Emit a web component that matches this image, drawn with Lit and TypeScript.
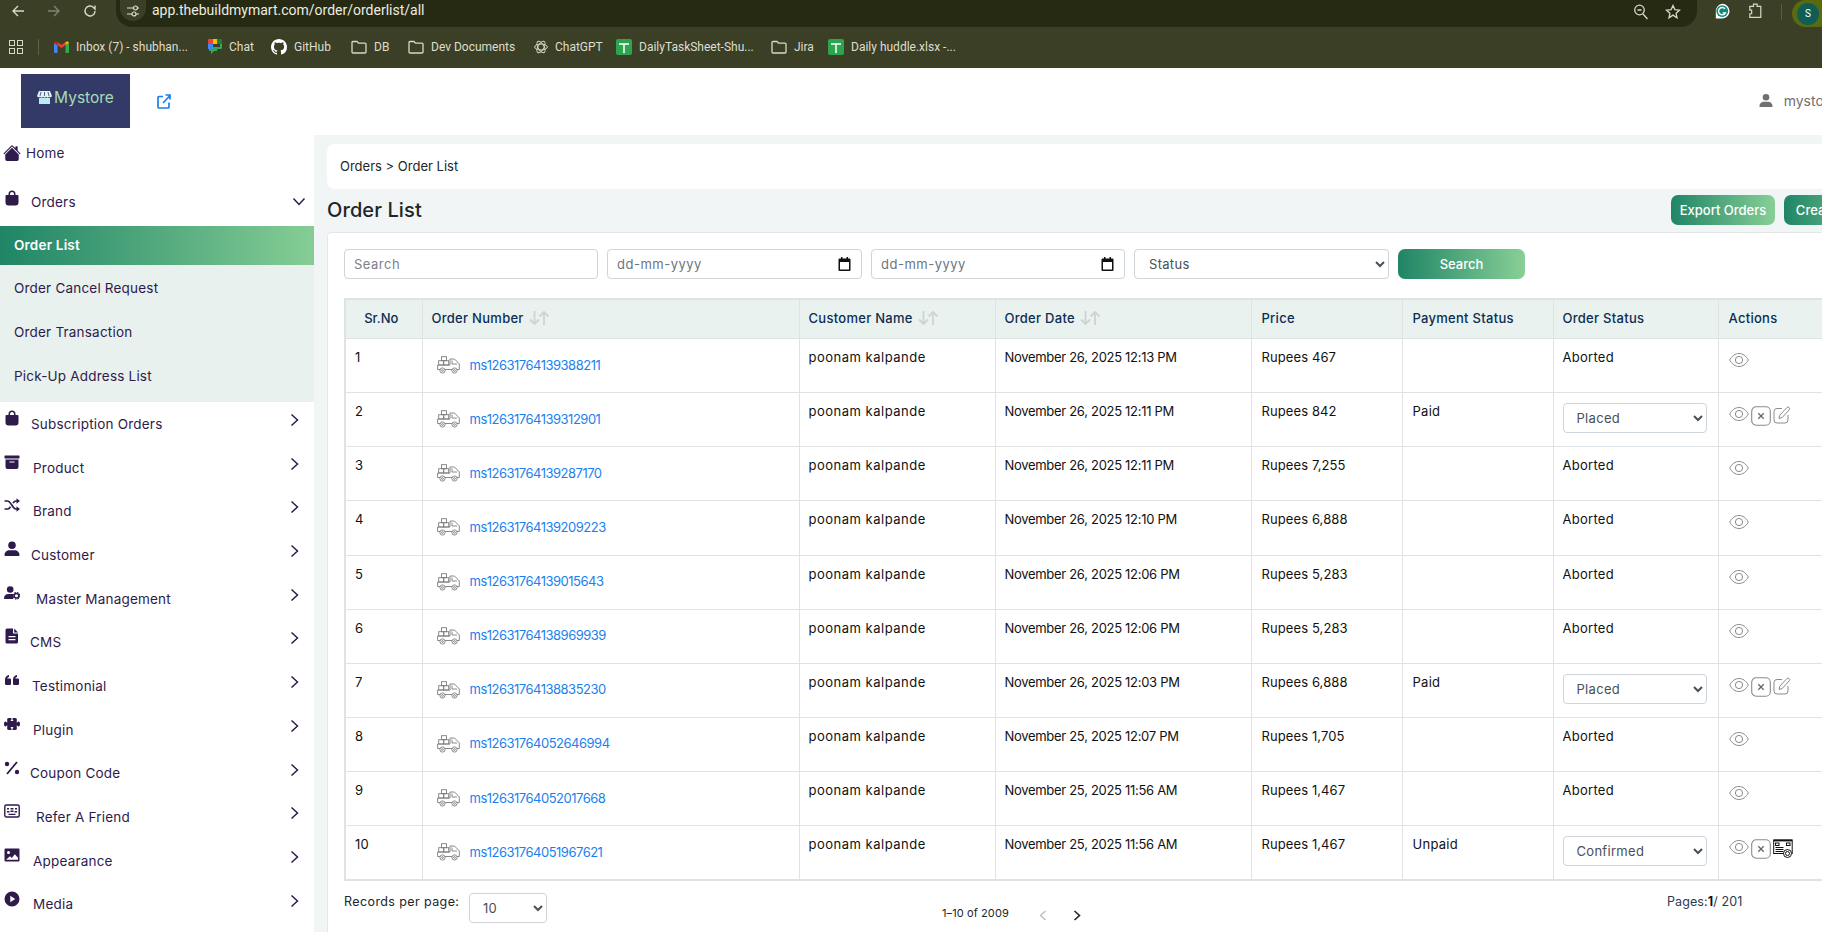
import { LitElement, html, css, svg } from "lit";
import { customElement } from "lit/decorators.js";

const F = (d: string) => svg`<path fill="currentColor" fill-rule="evenodd" d=${d}/>`;
const sideIcons: Record<string, unknown> = {
  home: svg`<path fill="currentColor" d="M8.707 1.5a1 1 0 0 0-1.414 0L.646 8.146a.5.5 0 0 0 .708.708L8 2.207l6.646 6.647a.5.5 0 0 0 .708-.708L13 5.793V2.5a.5.5 0 0 0-.5-.5h-1a.5.5 0 0 0-.5.5v1.293L8.707 1.5Z"/><path fill="currentColor" d="m8 3.293 6 6V13.5a1.5 1.5 0 0 1-1.5 1.5h-9A1.5 1.5 0 0 1 2 13.5V9.293l6-6Z"/>`,
  bag: F("M4.5 5V4a3.5 3.5 0 0 1 7 0v1h2a1 1 0 0 1 1 1v6.5a3 3 0 0 1-3 3h-7a3 3 0 0 1-3-3V6a1 1 0 0 1 1-1zM6 5h4V4a2 2 0 0 0-4 0z"),
  box: F("M1 1.5h14a.5.5 0 0 1 .5.5v2a.5.5 0 0 1-.5.5H1a.5.5 0 0 1-.5-.5V2a.5.5 0 0 1 .5-.5zM1.5 5.5h13V13a2 2 0 0 1-2 2h-9a2 2 0 0 1-2-2zM5.5 7.5v1h5v-1z"),
  shuffle: svg`<g fill="none" stroke="currentColor" stroke-width="1.7"><path d="M.5 4h3c3.5 0 5 8 8.500 8h1.500M.5 12h3c1.300 0 2.200-1 3-2.300M9 6c.8-1.100 1.700-2 3-2h1.500"/></g><path fill="currentColor" d="M12.500 1.300 16 4l-3.500 2.700zM12.500 9.300 16 12l-3.500 2.700z"/>`,
  user: F("M8 .5a3.800 3.800 0 1 1 0 7.600A3.800 3.800 0 0 1 8 .5zM1.500 15c-.6 0-1-.4-1-1 0-3 2.500-4.800 5-4.800h5c2.500 0 5 1.800 5 4.800 0 .6-.4 1-1 1z"),
  usercog: svg`<path fill="currentColor" d="M6.200 1.200a3.300 3.300 0 1 1 0 6.600 3.300 3.300 0 0 1 0-6.600zM.5 14c-.4 0-.5-.3-.5-.7C0 10.800 1.800 9 4.200 9h3.600c.5 0 1 .1 1.400.2V14z"/><circle cx="12.500" cy="10.800" r="2.300" fill="none" stroke="currentColor" stroke-width="1.500"/><circle cx="12.500" cy="10.800" r="3.300" fill="none" stroke="currentColor" stroke-width="1.100" stroke-dasharray="1.500 1.100"/>`,
  file: F("M3 .5h6v4.200a.8.8 0 0 0 .8.8H14V14a1.500 1.500 0 0 1-1.500 1.500h-9.500A1.500 1.500 0 0 1 1.500 14V2A1.500 1.500 0 0 1 3 .5zM10.200.6 14 4.400h-3.800zM4.500 8v1.200h7V8zM4.500 11v1.200h7V11z"),
  quote: F("M1 7.500C1 5 2.800 3.300 5 3v2c-1 .2-1.600.8-1.700 1.500H6a1 1 0 0 1 1 1V12a1 1 0 0 1-1 1H2a1 1 0 0 1-1-1zM9 7.500C9 5 10.800 3.300 13 3v2c-1 .2-1.600.8-1.700 1.500H14a1 1 0 0 1 1 1V12a1 1 0 0 1-1 1h-4a1 1 0 0 1-1-1z"),
  puzzle: F("M3.112 3.645A1.5 1.5 0 0 1 4.605 2H7a.5.5 0 0 1 .5.5v.382c0 .696-.497 1.182-.872 1.469a.459.459 0 0 0-.115.118.113.113 0 0 0-.012.025L6.5 4.5v.003l.003.01c.004.01.014.028.036.053a.86.86 0 0 0 .27.194C7.09 4.9 7.51 5 8 5c.492 0 .912-.1 1.19-.24a.86.86 0 0 0 .271-.194.213.213 0 0 0 .036-.054l.003-.01v-.008a.112.112 0 0 0-.012-.025.459.459 0 0 0-.115-.118c-.375-.287-.872-.773-.872-1.469V2.5A.5.5 0 0 1 9 2h2.395a1.5 1.5 0 0 1 1.493 1.645L12.645 6.5h.237c.195 0 .42-.147.675-.48.21-.274.528-.52.943-.52.568 0 .947.447 1.154.862C15.877 6.807 16 7.387 16 8s-.123 1.193-.346 1.638c-.207.415-.586.862-1.154.862-.415 0-.733-.246-.943-.52-.255-.333-.48-.48-.675-.48h-.237l.243 2.855A1.5 1.5 0 0 1 11.395 14H9a.5.5 0 0 1-.5-.5v-.382c0-.696.497-1.182.872-1.469a.459.459 0 0 0 .115-.118.113.113 0 0 0 .012-.025L9.5 11.500v-.003a.214.214 0 0 0-.039-.064.859.859 0 0 0-.27-.193C8.910 11.100 8.490 11 8 11c-.491 0-.912.100-1.190.240a.859.859 0 0 0-.271.194.214.214 0 0 0-.039.063v.003l.001.006a.113.113 0 0 0 .012.025c.016.027.05.068.115.118.375.287.872.773.872 1.469v.382a.5.5 0 0 1-.5.5H4.605a1.5 1.5 0 0 1-1.493-1.645L3.356 9.500h-.238c-.195 0-.42.147-.675.48-.21.274-.528.52-.943.52-.568 0-.947-.447-1.154-.862C.123 9.193 0 8.613 0 8s.123-1.193.346-1.638C.553 5.947.932 5.500 1.500 5.500c.415 0 .733.246.943.52.255.333.48.48.675.48h.238l-.244-2.855z"),
  percent: svg`<path stroke="currentColor" stroke-width="1.800" d="M3 14 13 2"/><circle cx="3" cy="4" r="2.200" fill="currentColor"/><circle cx="13" cy="12" r="2.200" fill="currentColor"/>`,
  refer: svg`<rect x=".8" y="2" width="14.400" height="12" rx="1.500" fill="none" stroke="currentColor" stroke-width="1.400"/><path fill="currentColor" d="M3 5h2v1.500H3zM6.500 5h3v1.500h-3zM11 5h2v1.500h-2zM3 8h2.500v1.500H3zM10.500 8H13v1.500h-2.500zM6.500 7.500h3V9h-3zM4.500 10.800h7v1.200h-7z"/>`,
  image: F("M1.500 1.500h13a1 1 0 0 1 1 1v11a1 1 0 0 1-1 1h-13a1 1 0 0 1-1-1v-11a1 1 0 0 1 1-1zM4.500 4a1.500 1.500 0 1 0 0 3 1.500 1.500 0 0 0 0-3zM2 12.800h12v-2l-3.200-3.600-3 3.800-1.800-1.700z"),
  play: F("M8 .5a7.500 7.500 0 1 1 0 15 7.500 7.500 0 0 1 0-15zM6.300 4.800v6.400L11.200 8z"),
};

const nav = [
  { t: "Subscription Orders", i: "bag", x: 31 },
  { t: "Product", i: "box", x: 33 },
  { t: "Brand", i: "shuffle", x: 33 },
  { t: "Customer", i: "user", x: 31 },
  { t: "Master Management", i: "usercog", x: 36 },
  { t: "CMS", i: "file", x: 30 },
  { t: "Testimonial", i: "quote", x: 32 },
  { t: "Plugin", i: "puzzle", x: 33 },
  { t: "Coupon Code", i: "percent", x: 30 },
  { t: "Refer A Friend", i: "refer", x: 36 },
  { t: "Appearance", i: "image", x: 33 },
  { t: "Media", i: "play", x: 33 },
];

const rows = [
  ["1", "ms12631764139388211", "November 26, 2025 12:13 PM", "Rupees 467", "", "Aborted", "v"],
  ["2", "ms12631764139312901", "November 26, 2025 12:11 PM", "Rupees 842", "Paid", "Placed", "vxe"],
  ["3", "ms12631764139287170", "November 26, 2025 12:11 PM", "Rupees 7,255", "", "Aborted", "v"],
  ["4", "ms12631764139209223", "November 26, 2025 12:10 PM", "Rupees 6,888", "", "Aborted", "v"],
  ["5", "ms12631764139015643", "November 26, 2025 12:06 PM", "Rupees 5,283", "", "Aborted", "v"],
  ["6", "ms12631764138969939", "November 26, 2025 12:06 PM", "Rupees 5,283", "", "Aborted", "v"],
  ["7", "ms12631764138835230", "November 26, 2025 12:03 PM", "Rupees 6,888", "Paid", "Placed", "vxe"],
  ["8", "ms12631764052646994", "November 25, 2025 12:07 PM", "Rupees 1,705", "", "Aborted", "v"],
  ["9", "ms12631764052017668", "November 25, 2025 11:56 AM", "Rupees 1,467", "", "Aborted", "v"],
  ["10", "ms12631764051967621", "November 25, 2025 11:56 AM", "Rupees 1,467", "Unpaid", "Confirmed", "vxr"],
];

const folder = svg`<svg width="16" height="14" viewBox="0 0 16 14"><path d="M1 2.500a1 1 0 0 1 1-1h4l1.500 1.700H14a1 1 0 0 1 1 1v7.800a1 1 0 0 1-1 1H2a1 1 0 0 1-1-1z" fill="none" stroke="#d9d9c6" stroke-width="1.300"/></svg>`;
const sheet = svg`<svg width="16" height="16" viewBox="0 0 16 16"><rect width="16" height="16" rx="2" fill="#2da44e"/><path d="M3 5h10M8 5v9" stroke="#fff" stroke-width="1.500"/></svg>`;
const gmail = svg`<svg width="15" height="12" viewBox="0 0 15 12"><path d="M0 2v9a1 1 0 0 0 1 1h2.500V4z" fill="#4285f4"/><path d="M15 2v9a1 1 0 0 1-1 1h-2.500V4z" fill="#34a853"/><path d="M3.500 4 7.500 7l4-3V1L7.500 4 3.500 1z" fill="#ea4335"/><path d="M0 2c0-1.500 2-2 3.500-1v3L0 2z" fill="#c5221f"/><path d="M15 2c0-1.500-2-2-3.500-1v3L15 2z" fill="#fbbc04"/></svg>`;
const chat = svg`<svg width="14" height="15" viewBox="0 0 14 15"><path d="M1 0h4v5H0V1a1 1 0 0 1 1-1z" fill="#ea4335"/><path d="M5 0h4v5H5z" fill="#fbbc04"/><path d="M9 0h4a1 1 0 0 1 1 1v4H9z" fill="#188038"/><path d="M0 5h5v5H0z" fill="#4285f4"/><path d="M5 10h8a1 1 0 0 0 1-1V5h-2v3H5z" fill="#34a853"/><path d="M1 10h8v2H6l-3 3v-3H2a1 1 0 0 1-1-1z" fill="#34a853"/></svg>`;
const github = svg`<svg width="16" height="16" viewBox="0 0 16 16"><path fill="#fff" d="M8 0C3.58 0 0 3.58 0 8c0 3.54 2.29 6.53 5.47 7.59.4.07.55-.17.55-.38 0-.19-.01-.82-.01-1.49-2.01.37-2.53-.49-2.69-.94-.09-.23-.48-.94-.82-1.13-.28-.15-.68-.52-.01-.53.63-.01 1.08.58 1.23.82.72 1.21 1.87.87 2.33.66.07-.52.28-.87.51-1.07-1.78-.2-3.64-.89-3.64-3.95 0-.87.31-1.59.82-2.15-.08-.2-.36-1.02.08-2.12 0 0 .67-.21 2.2.82.64-.18 1.32-.27 2-.27.68 0 1.36.09 2 .27 1.53-1.04 2.2-.82 2.2-.82.44 1.1.16 1.92.08 2.12.51.56.82 1.27.82 2.15 0 3.07-1.87 3.75-3.65 3.95.29.25.54.73.54 1.48 0 1.07-.01 1.93-.01 2.2 0 .21.15.46.55.38A8.013 8.013 0 0 0 16 8c0-4.42-3.58-8-8-8z"/></svg>`;
const gpt = svg`<svg width="14" height="14" viewBox="0 0 14 14" fill="none" stroke="#d9d9c6" stroke-width="1"><ellipse cx="7" cy="7" rx="6.300" ry="3"/><ellipse cx="7" cy="7" rx="6.300" ry="3" transform="rotate(60 7 7)"/><ellipse cx="7" cy="7" rx="6.300" ry="3" transform="rotate(120 7 7)"/></svg>`;
const bookmarks = [
  { ic: gmail, t: "Inbox (7) - shubhan...", w: 112, g: 20 },
  { ic: chat, t: "Chat", w: 26, g: 16 },
  { ic: github, t: "GitHub", w: 38, g: 19 },
  { ic: folder, t: "DB", w: 16, g: 18 },
  { ic: folder, t: "Dev Documents", w: 85, g: 18 },
  { ic: gpt, t: "ChatGPT", w: 46, g: 15 },
  { ic: sheet, t: "DailyTaskSheet-Shu...", w: 112, g: 20 },
  { ic: folder, t: "Jira", w: 18, g: 16 },
  { ic: sheet, t: "Daily huddle.xlsx -...", w: 105, g: 0 },
];

const eye = svg`<svg class="act" width="20" height="16" viewBox="0 0 20 16" fill="none" stroke="#8a8a8a" stroke-width="1"><path d="M.7 8C3 3.800 6.300 1.500 10 1.500S17 3.800 19.300 8C17 12.200 13.700 14.500 10 14.500S3 12.200.7 8z"/><circle cx="10" cy="8" r="3.600"/></svg>`;
const xbtn = svg`<svg class="act" width="20" height="20" viewBox="0 0 20 20" fill="none" stroke="#8a8a8a"><rect x=".7" y=".7" width="18.600" height="18.600" rx="4.500" stroke-width="1.100"/><path d="M7.300 7.300l5.400 5.400M12.700 7.300l-5.400 5.400" stroke="#666" stroke-width="1.300"/></svg>`;
const edit = svg`<svg class="act" width="18" height="18" viewBox="0 0 18 18" fill="none" stroke="#8a8a8a" stroke-width="1"><path d="M9 2.500H4a3 3 0 0 0-3 3V14a3 3 0 0 0 3 3h8a3 3 0 0 0 3-3V9"/><path d="M6 12.500l.8-3.300L14 1.500a1.400 1.400 0 0 1 2 0l.3.300a1.400 1.400 0 0 1 0 2L9.200 11.500z"/></svg>`;
const receipt = svg`<svg class="act" width="20" height="20" viewBox="0 0 20 20" fill="none" stroke="#111" stroke-width="1"><rect x=".7" y="1" width="18.500" height="13.500"/><path d="M.7 1.500h18.500" stroke-width="1.800"/><rect x="2.500" y="4" width="3.500" height="2.500"/><rect x="13.500" y="4" width="3.500" height="2.500"/><path d="M2.500 8.500h8M2.500 10.500h8M2.500 12.500h8"/><circle cx="14.500" cy="14.500" r="4" fill="#fff"/><circle cx="14.500" cy="14.500" r="2"/></svg>`;
const truck = svg`<svg class="truck" width="23" height="18" viewBox="0 0 23 18" fill="none" stroke="#7d7d7d" stroke-width=".9"><rect x="4.500" y=".7" width="5" height="4"/><rect x="1.700" y="4.700" width="5" height="4.300"/><rect x="6.700" y="4.700" width="5" height="4.300"/><path d="M.6 9h12.400V3h4.500l4.800 5v5.500H.6zM15 4.500v3.500h5"/><circle cx="5.500" cy="14.500" r="2.600" fill="#fff"/><circle cx="5.500" cy="14.500" r=".9"/><circle cx="17.500" cy="14.500" r="2.600" fill="#fff"/><circle cx="17.500" cy="14.500" r=".9"/></svg>`;
const sortIcon = svg`<svg class="sort" width="21" height="14" viewBox="0 0 21 14" fill="none" stroke="#d0d3d3" stroke-width="1.800"><path d="M5.500 0v13M1 8.500l4.500 4.500L10 8.500M15 14V1M10.500 5.500 15 1l4.500 4.500"/></svg>`;
const calendar = svg`<svg class="cal" width="13" height="14" viewBox="0 0 13 14"><path fill="#111" fill-rule="evenodd" d="M3 0h1.500v1.500h4V0H10v1.500h1.500a1 1 0 0 1 1 1V13a1 1 0 0 1-1 1h-10a1 1 0 0 1-1-1V2.500a1 1 0 0 1 1-1H3zM2 5v7.500h9V5z"/></svg>`;

@customElement("app-root")
export class AppRoot extends LitElement {
  static styles = css`
    :host { display: block; width: 1822px; height: 932px; overflow: hidden; background: #fff;
      font-family: "Inter", "Noto Sans", sans-serif; font-size: 13px; color: #212529; }
    * { box-sizing: border-box; }
    .toolbar { height: 27px; background: #3a3f26; display: flex; align-items: flex-start; position: relative; }
    .navbtn { width: 36px; height: 22px; display: flex; align-items: center; justify-content: center; color: #d8d8c8; flex: none; }
    .navs { display: flex; margin-left: 0; width: 116px; }
    .omni { width: 1581px; height: 27px; background: #262a12; border-radius: 0 0 16px 16px; display: flex; align-items: flex-start; flex: none; }
    .pill { width: 26px; height: 21px; margin: 0 6px 0 4px; border-radius: 0 0 13px 13px; background: #3a3f26; display: flex; align-items: center; justify-content: center; flex: none; }
    .url { font: 14px/21px "Roboto", sans-serif; color: #ecece0; }
    .url-end { margin-left: auto; display: flex; gap: 16px; padding: 4px 16px 0 0; }
    .ext { display: flex; align-items: flex-start; flex: 1; padding: 2px 0 0 17px; gap: 18px; overflow: hidden; }
    .sep { width: 1px; height: 16px; background: #5a5f45; margin-top: 2px; }
    .avatar { width: 30px; height: 27px; border-radius: 14px 0 0 14px; background: #5a6a10; display: flex; align-items: center; padding-left: 5px; margin: -2px 0 0 -8px; flex: none; }
    .avatar b { width: 22px; height: 22px; border-radius: 50%; background: #0f5e55; color: #fff; font: 10px/22px "Roboto", sans-serif; text-align: center; }
    .bookmarks { height: 41px; background: #3a3f26; display: flex; align-items: center; padding: 0 0 2px 9px; color: #dedecd; font: 12px "Roboto", sans-serif; }
    .grid { flex: none; display: grid; grid-template-columns: 6px 6px; gap: 2px; }
    .grid i { width: 6px; height: 6px; border: 1px solid #d6d6c4; display: block; }
    .bsep { width: 1px; height: 16px; background: #5d624a; margin: 0 15px; }
    .bm { display: flex; align-items: center; gap: 7px; flex: none; white-space: nowrap; }
    .bm span { display: block; }
    .head { height: 67px; width: 1860px; display: flex; align-items: flex-start; padding: 6px 23px 0 21px; background: #fff; }
    .logo { width: 109px; height: 54px; background: #343a68; display: flex; align-items: center; justify-content: center; gap: 2px; color: #a5dcb6; font-size: 15.500px; flex: none; padding-bottom: 8px; }
    .extlink { margin: 20px 0 0 27px; color: #1a7fef; display: block; }
    .user { margin-left: auto; display: flex; align-items: center; gap: 11px; margin-top: 18px; color: #707070; font-size: 14px; }
    .body { display: flex; height: 797px; }
    aside { width: 314px; flex: none; background: #fff; color: #2f1a4c; font-size: 13.500px; letter-spacing: .2px; }
    .item { height: 43.700px; display: flex; align-items: center; padding-left: 4px; position: relative; }
    .item .ic { position: absolute; left: 4px; top: 8px; width: 16px; height: 16px; }
    .home { height: 44px; padding-bottom: 8px; }
    .home .ic { top: 9px; left: 3px; width: 18px; height: 18px; }
    .home span { margin-left: 22px; }
    .orders { height: 47px; padding-bottom: 2px; }
    .orders .ic { top: 11px; }
    .chev { position: absolute; right: 15px; top: 11px; }
    .orders .chev { right: 8px; top: 18px; }
    .sub { background: #e8f1ee; padding-bottom: 4px; }
    .sub .s { height: 44px; padding-left: 14px; display: flex; align-items: center; }
    .sub .on { height: 39px; margin-bottom: 1px; padding-bottom: 1px; color: #fff; font-weight: 600; background: linear-gradient(90deg, #1f8566, #86cd95); }
    main { flex: none; width: 1640px; background: #f1f5f5; padding: 9px 0 0 13px; }
    .crumb { height: 45px; width: 1600px; background: #fff; border-radius: 8px; display: flex; align-items: center; padding: 0 0 2px 13px; font-size: 13px; }
    .titlebar { display: flex; height: 43px; width: 1600px; align-items: center; padding: 0 39px 2px 0; }
    h1 { margin: 0; font-size: 20px; font-weight: 500; color: #212529; letter-spacing: .1px; white-space: nowrap; }
    .btn { height: 30px; padding: 0 10px; border-radius: 7px; border: 0; font: 500 13px "Inter", sans-serif; color: #fff; background: linear-gradient(90deg, #1f8566, #88cf96); white-space: nowrap; }
    .tbtns { margin-left: auto; display: flex; gap: 9px; }
    .tbtns .btn { width: 104px; padding: 0; }
    .card { background: #fff; border: 1px solid #e3e7e8; border-radius: 4px 0 0 0; width: 1600px; height: 706px; padding: 16px 0 0 16px; }
    .filters { display: flex; gap: 9px; height: 30px; }
    .fld { height: 30px; width: 254px; border: 1px solid #ced4da; border-radius: 4px; background: #fff; display: flex; align-items: center; padding: 0 9px; color: #6c757d; font-size: 13px; letter-spacing: .5px; justify-content: space-between; flex: none; }
    .fld.wide { width: 255px; }
    .fld input { border: 0; outline: 0; padding: 0; width: 100%; font: inherit; color: inherit; background: transparent; letter-spacing: inherit; }
    .fld input::placeholder { color: #7b8187; opacity: 1; }
    .cal { margin-right: 1px; flex: none; }
    select { font: 13px "Inter", sans-serif; color: #495057; letter-spacing: .3px; height: 30px; border: 1px solid #ced4da; border-radius: 4px; background: #fff; outline: 0; }
    .fstatus { width: 255px; padding-left: 10px; }
    .fbtn { width: 127px; }
    table { border-collapse: collapse; table-layout: fixed; width: 1534px; margin-top: 19px; border: 2px solid #dfe3e6; }
    th, td { border: 1px solid #dfe3e6; padding: 0 9px; text-align: left; vertical-align: top; font-weight: 400; letter-spacing: .28px; }
    th { height: 39.500px; background: #e9f2ef; color: #0c2d52; font-weight: 500; vertical-align: middle; white-space: nowrap; padding-bottom: 2px; }
    th.c { text-align: center; padding: 0 5px 2px 0; letter-spacing: 0; }
    th.wide, td.wide { padding-left: 10px; }
    td { height: 54.150px; padding-top: 10px; line-height: 17px; color: #111; }
    td.name { letter-spacing: .5px; }
    td.date { letter-spacing: -.3px; }
    td.price { letter-spacing: .1px; }
    .sort { vertical-align: -2px; margin-left: 5px; }
    .onum { display: flex; align-items: center; gap: 10px; padding: 13px 0 0 5px; margin-top: -10px; height: 39px; }
    .onum a { color: #1a7fef; text-decoration: none; letter-spacing: -.5px; }
    .truck { flex: none; }
    .st { width: 144px; padding-left: 9px; margin-top: 0; display: block; }
    .actions { display: flex; align-items: flex-start; gap: 2px; margin: 3px 0 0 0; }
    .act { flex: none; display: block; }
    .foot { position: relative; height: 48px; }
    .rpp { position: absolute; left: 0; top: 13px; font-size: 12.500px; letter-spacing: .4px; }
    .rsel { position: absolute; left: 125px; top: 12px; width: 78px; padding-left: 9px; }
    .range { position: absolute; left: 598px; top: 25px; font-size: 11px; letter-spacing: .1px; }
    .pv { position: absolute; top: 29px; }
    .pages { position: absolute; left: 1323px; top: 13px; font-size: 12.500px; letter-spacing: .1px; color: #2b3a4d; }
    .pages b { color: #111; }
  `;

  side(t: { t: string; i: string; x: number }) {
    return html`<div class="item">
      <svg class="ic" viewBox="0 0 16 16">${sideIcons[t.i]}</svg>
      <span style="margin-left:${t.x - 4}px">${t.t}</span>
      <svg class="chev" width="9" height="14" viewBox="0 0 9 14" fill="none" stroke="#2f1a4c" stroke-width="1.500"><path d="M1.500 1.500 7.500 7l-6 5.500"/></svg>
    </div>`;
  }

  render() {
    return html`
      <div class="toolbar">
        <div class="navs">
          <span class="navbtn"><svg width="14" height="14" viewBox="0 0 14 14" fill="none" stroke="currentColor" stroke-width="1.400"><path d="M13 7H2M7 2 2 7l5 5"/></svg></span>
          <span class="navbtn" style="opacity:.45"><svg width="14" height="14" viewBox="0 0 14 14" fill="none" stroke="currentColor" stroke-width="1.400"><path d="M1 7h11M7 2l5 5-5 5"/></svg></span>
          <span class="navbtn"><svg width="14" height="14" viewBox="0 0 14 14" fill="none" stroke="currentColor" stroke-width="1.400"><path d="M12 7a5 5 0 1 1-1.500-3.600L12 5V1.500"/></svg></span>
        </div>
        <div class="omni">
          <span class="pill"><svg width="14" height="14" viewBox="0 0 14 14" fill="none" stroke="#e0e0d0" stroke-width="1.200"><path d="M1 4h6M10 10h3M1 10h5M12 4h1"/><circle cx="9.500" cy="4" r="2"/><circle cx="8" cy="10" r="2"/></svg></span>
          <span class="url">app.thebuildmymart.com/order/orderlist/all</span>
          <div class="url-end">
            <svg width="16" height="16" viewBox="0 0 16 16" fill="none" stroke="#d8d8c8" stroke-width="1.300"><circle cx="6.500" cy="6" r="4.800"/><path d="M10 10l4.500 5M4.500 6h4"/></svg>
            <svg width="16" height="16" viewBox="0 0 16 16" fill="none" stroke="#d8d8c8" stroke-width="1.300"><path d="M8 1.500l1.900 4.200 4.600.5-3.400 3.100.9 4.500L8 11.100l-4 2.700.9-4.500L1.500 6.200l4.600-.5z"/></svg>
          </div>
        </div>
        <div class="ext">
          <svg width="18" height="20" viewBox="0 0 18 20"><path d="M9 1a8 8 0 0 1 8 8c0 4-3 8-8 8H2V9a8 8 0 0 1 7-8z" fill="#fff"/><circle cx="9" cy="9" r="6.500" fill="#0f8a78"/><path d="M12 6.500A4 4 0 1 0 12.500 11H9.500" fill="none" stroke="#fff" stroke-width="1.500"/></svg>
          <svg width="16" height="18" viewBox="0 0 16 18" fill="none" stroke="#d8d8c8" stroke-width="1.300"><path d="M2 4h4V1.500h4V4h4v12H2v-4h2V8H2z"/></svg>
          <span class="sep"></span>
          <span class="avatar"><b>S</b></span>
        </div>
      </div>
      <div class="bookmarks">
        <span class="grid"><i></i><i></i><i></i><i></i></span>
        <span class="bsep"></span>
        ${bookmarks.map(b => html`<div class="bm" style="margin-right:${b.g}px">${b.ic}<span style="width:${b.w}px">${b.t}</span></div>`)}
      </div>
      <div class="head">
        <div class="logo">
          <svg width="15" height="15" viewBox="0 0 15 15"><path d="M2 1h11l2 5a1.800 1.800 0 0 1-3 .8 2 2 0 0 1-3 0 2 2 0 0 1-3 0 2 2 0 0 1-3 0A1.800 1.800 0 0 1 0 6z" fill="#dff3f5"/><path d="M4 2 3 6M7.500 2v4M11 2l1 4" stroke="#343a68" stroke-width=".8"/><rect x="2" y="8" width="11" height="6" fill="#bfeaf3"/></svg>
          <span>Mystore</span>
        </div>
        <svg class="extlink" width="14" height="15" viewBox="0 0 14 15" fill="none" stroke="currentColor" stroke-width="1.700"><path d="M6 2.500H2a1 1 0 0 0-1 1V13a1 1 0 0 0 1 1h9a1 1 0 0 0 1-1V8.500M6 9l7-7.500M8.500 1H13v4.500"/></svg>
        <div class="user">
          <svg width="14" height="15" viewBox="0 0 16 16">${F("M8 .5a3.800 3.800 0 1 1 0 7.600A3.800 3.800 0 0 1 8 .5zM1.500 15.500c-.6 0-1-.4-1-1 0-3 2.500-5 5-5h5c2.500 0 5 2 5 5 0 .6-.4 1-1 1z")}</svg>
          <span>mystore</span>
        </div>
      </div>
      <div class="body">
        <aside>
          <div class="item home"><svg class="ic" viewBox="0 0 16 16">${sideIcons.home}</svg><span>Home</span></div>
          <div class="item orders">
            <svg class="ic" viewBox="0 0 16 16">${sideIcons.bag}</svg>
            <span style="margin-left:27px">Orders</span>
            <svg class="chev" width="14" height="9" viewBox="0 0 14 9" fill="none" stroke="#2f1a4c" stroke-width="1.500"><path d="M1.500 1.500 7 7.500l5.500-6"/></svg>
          </div>
          <div class="sub">
            <div class="s on">Order List</div>
            <div class="s">Order Cancel Request</div>
            <div class="s">Order Transaction</div>
            <div class="s">Pick-Up Address List</div>
          </div>
          ${nav.map(n => this.side(n))}
        </aside>
        <main>
          <div class="crumb">Orders &gt; Order List</div>
          <div class="titlebar">
            <h1>Order List</h1>
            <div class="tbtns"><button class="btn">Export Orders</button><button class="btn">Create Order</button></div>
          </div>
          <div class="card">
            <div class="filters">
              <div class="fld"><input placeholder="Search" /></div>
              <div class="fld wide"><span>dd-mm-yyyy</span>${calendar}</div>
              <div class="fld"><span>dd-mm-yyyy</span>${calendar}</div>
              <select class="fstatus"><option>Status</option></select>
              <button class="btn fbtn">Search</button>
            </div>
            <table>
              <colgroup><col style="width:77px"/><col style="width:377px"/><col style="width:196px"/><col style="width:256px"/><col style="width:151px"/><col style="width:151px"/><col style="width:165px"/><col /></colgroup>
              <thead><tr>
                <th class="c">Sr.No</th>
                <th>Order Number${sortIcon}</th>
                <th>Customer Name${sortIcon}</th>
                <th>Order Date${sortIcon}</th>
                <th class="wide">Price</th><th class="wide">Payment Status</th><th>Order Status</th><th class="wide">Actions</th>
              </tr></thead>
              <tbody>
                ${rows.map(r => html`<tr>
                  <td>${r[0]}</td>
                  <td><div class="onum">${truck}<a href="#">${r[1]}</a></div></td>
                  <td class="name">poonam kalpande</td>
                  <td class="date">${r[2]}</td>
                  <td class="price wide">${r[3]}</td>
                  <td class="wide">${r[4]}</td>
                  <td>${r[5] === "Aborted" ? r[5] : html`<select class="st"><option>${r[5]}</option></select>`}</td>
                  <td class="wide"><div class="actions">
                    ${eye}${r[6].includes("x") ? xbtn : ""}${r[6].includes("e") ? edit : ""}${r[6].includes("r") ? receipt : ""}
                  </div></td>
                </tr>`)}
              </tbody>
            </table>
            <div class="foot">
              <span class="rpp">Records per page:</span>
              <select class="rsel"><option>10</option></select>
              <span class="range">1–10 of 2009</span>
              <svg class="pv" style="left:695px" width="8" height="11" viewBox="0 0 8 11" fill="none" stroke="#bbb" stroke-width="1.300"><path d="M6.500 1 1.500 5.500l5 4.500"/></svg>
              <svg class="pv" style="left:729px" width="8" height="11" viewBox="0 0 8 11" fill="none" stroke="#222" stroke-width="1.600"><path d="M1.500 1l5 4.500-5 4.500"/></svg>
              <span class="pages">Pages:<b>1</b>/ 201</span>
            </div>
          </div>
        </main>
      </div>
    `;
  }
}
